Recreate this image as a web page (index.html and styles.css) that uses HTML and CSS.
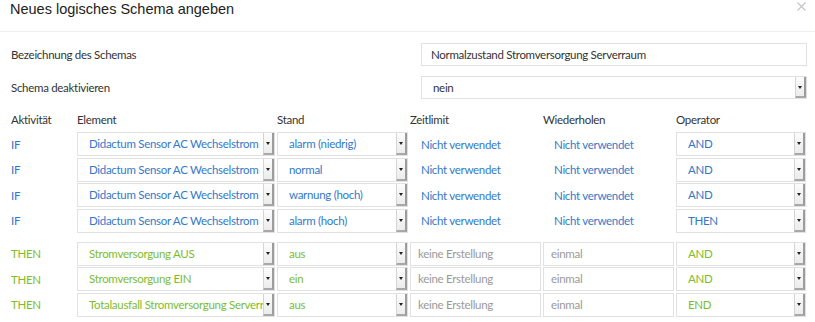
FILE: index.html
```html
<!DOCTYPE html>
<html lang="de">
<head>
  <meta charset="UTF-8" />
  <title>Neues logisches Schema angeben</title>
  <link rel="stylesheet" href="styles.css">
</head>
<body>
  <div class="modal">
    <div class="modal-header">
      <h1>Neues logisches Schema angeben</h1>
      <span class="close">
        <svg width="9" height="9" viewBox="0 0 9 9"><path d="M0.5 0.5 L8.5 8.5 M8.5 0.5 L0.5 8.5" stroke="#c4c4c4" stroke-width="1.1" fill="none"/></svg>
      </span>
    </div>

    <div class="modal-body">
      <div class="form-row">
        <label>Bezeichnung des Schemas</label>
        <div class="field">Normalzustand Stromversorgung Serverraum</div>
      </div>
      <div class="form-row">
        <label>Schema deaktivieren</label>
        <div class="field select">nein<span class="arrow"></span></div>
      </div>

      <div class="row head">
        <div>Aktivität</div>
        <div>Element</div>
        <div>Stand</div>
        <div>Zeitlimit</div>
        <div>Wiederholen</div>
        <div>Operator</div>
      </div>

      <div class="section if">
        <div class="row">
          <div class="act">IF</div>
          <div class="box select">Didactum Sensor AC Wechselstrom<span class="arrow"></span></div>
          <div class="box select">alarm (niedrig)<span class="arrow"></span></div>
          <div class="text">Nicht verwendet</div>
          <div class="text">Nicht verwendet</div>
          <div class="box select">AND<span class="arrow"></span></div>
        </div>
        <div class="row">
          <div class="act">IF</div>
          <div class="box select">Didactum Sensor AC Wechselstrom<span class="arrow"></span></div>
          <div class="box select">normal<span class="arrow"></span></div>
          <div class="text">Nicht verwendet</div>
          <div class="text">Nicht verwendet</div>
          <div class="box select">AND<span class="arrow"></span></div>
        </div>
        <div class="row">
          <div class="act">IF</div>
          <div class="box select">Didactum Sensor AC Wechselstrom<span class="arrow"></span></div>
          <div class="box select">warnung (hoch)<span class="arrow"></span></div>
          <div class="text">Nicht verwendet</div>
          <div class="text">Nicht verwendet</div>
          <div class="box select">AND<span class="arrow"></span></div>
        </div>
        <div class="row">
          <div class="act">IF</div>
          <div class="box select">Didactum Sensor AC Wechselstrom<span class="arrow"></span></div>
          <div class="box select">alarm (hoch)<span class="arrow"></span></div>
          <div class="text">Nicht verwendet</div>
          <div class="text">Nicht verwendet</div>
          <div class="box select">THEN<span class="arrow"></span></div>
        </div>
      </div>

      <div class="section then">
        <div class="row">
          <div class="act">THEN</div>
          <div class="box select">Stromversorgung AUS<span class="arrow"></span></div>
          <div class="box select">aus<span class="arrow"></span></div>
          <div class="box plain">keine Erstellung</div>
          <div class="box plain">einmal</div>
          <div class="box select">AND<span class="arrow"></span></div>
        </div>
        <div class="row">
          <div class="act">THEN</div>
          <div class="box select">Stromversorgung EIN<span class="arrow"></span></div>
          <div class="box select">ein<span class="arrow"></span></div>
          <div class="box plain">keine Erstellung</div>
          <div class="box plain">einmal</div>
          <div class="box select">AND<span class="arrow"></span></div>
        </div>
        <div class="row">
          <div class="act">THEN</div>
          <div class="box select">Totalausfall Stromversorgung Serverraum<span class="arrow"></span></div>
          <div class="box select">aus<span class="arrow"></span></div>
          <div class="box plain">keine Erstellung</div>
          <div class="box plain">einmal</div>
          <div class="box select">END<span class="arrow"></span></div>
        </div>
      </div>
    </div>
  </div>
</body>
</html>
```

FILE: styles.css
```css
:root {
  --blue: #3479c9;
  --green: #7dbd2c;
  --label: #333;
  --muted: #9a9a9a;
  --line: #e1e1e1;
}

* {
  box-sizing: border-box;
}

body {
  margin: 0;
  background: #fff;
  font-family: "Lato", "Liberation Sans", sans-serif;
  font-size: 11.5px;
  letter-spacing: -0.3px;
  color: var(--label);
  overflow: hidden;
}

.modal-header {
  display: flex;
  justify-content: space-between;
  align-items: flex-start;
  height: 32px;
  padding: 0 9px 0 10px;
  border-bottom: 1px solid #f0f0f0;
}

.modal-header h1 {
  margin: 0;
  font-family: "Liberation Sans", sans-serif;
  font-weight: normal;
  font-size: 14.5px;
  letter-spacing: 0;
  line-height: 19px;
  color: #222;
}

.close {
  padding-top: 2px;
  line-height: 0;
}

.modal-body {
  padding: 11px 8px 0 11px;
}

.form-row {
  display: flex;
  align-items: center;
  height: 23px;
  margin-bottom: 10px;
}

.form-row label {
  width: 410px;
}

.field {
  position: relative;
  flex: 1;
  height: 23px;
  line-height: 21px;
  padding-left: 9px;
  border: 1px solid var(--line);
  color: var(--label);
}

.form-row .select {
  padding-left: 11px;
}

.row {
  display: grid;
  grid-template-columns: 64px 198px 131px 131px 131px 130px;
  column-gap: 2px;
  height: 24px;
  align-items: center;
}

.row + .row {
  margin-top: 1.5px;
}

.row.head {
  height: 20px;
  margin-top: 9px;
  margin-bottom: 3px;
}

.section.then {
  margin-top: 9px;
}

.if {
  color: var(--blue);
}

.then {
  color: var(--green);
}

.box {
  position: relative;
  height: 24px;
  line-height: 22px;
  padding-left: 11px;
  border: 1px solid var(--line);
  white-space: nowrap;
  overflow: hidden;
}

.box.select {
  padding-right: 12px;
}

.box.plain {
  padding-left: 7px;
  color: var(--muted);
}

.text {
  padding-left: 11px;
}

.arrow {
  position: absolute;
  top: 0;
  right: 0;
  bottom: 0;
  width: 11px;
  background: linear-gradient(#fcfcfc, #ececec);
  border-left: 1px solid #d4d4d4;
  border-right: 2px solid #9c9c9c;
  border-bottom: 2px solid #a8a8a8;
}

.arrow::after {
  content: "";
  position: absolute;
  left: 2px;
  top: 50%;
  margin-top: -1px;
  border-left: 2.5px solid transparent;
  border-right: 2.5px solid transparent;
  border-top: 3px solid #222;
}
```
